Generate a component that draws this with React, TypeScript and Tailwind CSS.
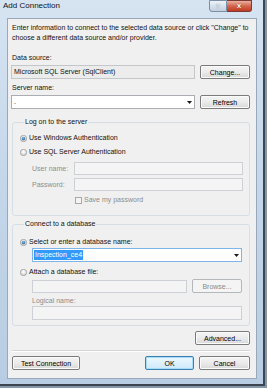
import React from "react";

const font = "font-['Liberation_Sans',Arial,sans-serif]";

function Radio({ checked }: { checked?: boolean }) {
  return (
    <svg width="7" height="7" viewBox="0 0 14 14" className="shrink-0">
      <defs>
        <radialGradient id="rg" cx="50%" cy="35%" r="60%">
          <stop offset="0%" stopColor="#ffffff" />
          <stop offset="100%" stopColor="#d4d4d4" />
        </radialGradient>
        <radialGradient id="rb" cx="45%" cy="35%" r="60%">
          <stop offset="0%" stopColor="#8fd0f5" />
          <stop offset="100%" stopColor="#1b5b9a" />
        </radialGradient>
      </defs>
      <circle cx="7" cy="7" r="6.3" fill="url(#rg)" stroke="#8a8a8a" strokeWidth="1.3" />
      {checked && <circle cx="7" cy="7" r="3.4" fill="url(#rb)" />}
    </svg>
  );
}

function Btn({ children, w, ok, disabled }: { children: React.ReactNode; w: string; ok?: boolean; disabled?: boolean }) {
  const base = "h-[14px] flex items-center justify-center rounded-[2px] border text-[7px] leading-none shrink-0 " + w;
  if (ok)
    return (
      <div className={base + " border-[#3c7fb1] bg-linear-to-b from-[#eef8fe] to-[#cde9fb] shadow-[inset_0_0_0_1px_#a6dcf8] text-black"}>
        {children}
      </div>
    );
  if (disabled)
    return <div className={base + " border-[#b5b8bb] bg-[#f4f4f4] text-[#8a8a8a]"}>{children}</div>;
  return (
    <div className={base + " border-[#7b7b7b] bg-linear-to-b from-[#f4f4f4] via-[#ebebeb] to-[#d8d8d8] shadow-[inset_0_0_0_1px_#fbfbfb] text-black"}>
      {children}
    </div>
  );
}

function Arrow() {
  return (
    <svg width="5" height="3" viewBox="0 0 5 3" className="shrink-0">
      <path d="M0 0H5L2.5 3Z" fill="#1a1a1a" />
    </svg>
  );
}

function Box({ className = "", children }: { className?: string; children?: React.ReactNode }) {
  return <div className={"border flex items-center " + className}>{children}</div>;
}

export default function App() {
  return (
    <div className={"w-[267px] h-[388px] bg-[#8397ab] " + font}>
      <div className="w-[265px] h-[386px] flex flex-col bg-linear-to-b from-[#d6e4f2] via-[#c3d6ea] to-[#b8cde3] border-r-2 border-b-2 border-[#3d4650] pl-[7px] pr-[6px] pb-[5px]">
        {/* title bar */}
        <div className="h-[18px] flex items-start justify-between -ml-[4px] -mr-[1px]">
          <span className="text-[8px] leading-none pt-[2px] text-[#111]">Add Connection</span>
          <div className="flex h-[12px] mr-[6px]">
            <div className="w-[18px] h-full rounded-bl-[3px] border border-[#7a8ea6] bg-linear-to-b from-[#eef3f9] to-[#c2d0e0] flex items-center justify-center text-[7px] text-[#f7f7f7] font-bold leading-none [text-shadow:0_0_1px_#4a5a6a]">
              ?
            </div>
            <div className="w-[25px] h-full rounded-br-[3px] border border-l-0 border-[#7a3a32] bg-linear-to-b from-[#eab0a2] via-[#d4654e] to-[#c0391f] flex items-center justify-center text-[8px] text-white font-bold leading-none [text-shadow:0_0_1px_#5a1a10]">
              x
            </div>
          </div>
        </div>

        {/* client area */}
        <div className="flex-1 bg-[#f0f0f0] border border-[#9aa9b9] pl-[3px] pr-[6px] flex flex-col text-[7px] leading-[10px] text-[#111]">
          <div className="pl-[1px] mt-[4px]">
            Enter information to connect to the selected data source or click "Change" to choose a different data source and/or provider.
          </div>

          <div className="mt-[10px] pl-[1px]">Data source:</div>
          <div className="mt-[2px] flex gap-[5px]">
            <Box className="flex-1 h-[14px] border-[#c4c7ca] bg-[#ececec] px-[2px]">Microsoft SQL Server (SqlClient)</Box>
            <Btn w="w-[50px]">Change...</Btn>
          </div>

          <div className="mt-[4px] pl-[1px]">Server name:</div>
          <div className="mt-[2px] flex gap-[5px]">
            <Box className="flex-1 h-[14px] border-[#abadb3] bg-white px-[2px] justify-between">
              <span>.</span>
              <Arrow />
            </Box>
            <Btn w="w-[50px]">Refresh</Btn>
          </div>

          {/* log on group */}
          <fieldset className="mt-[8px] ml-[1px] border border-[#d5dfe5] rounded-[3px] pl-[7px] pr-[6px] pb-[10px]">
            <legend className="ml-[4px] px-[1px]">Log on to the server</legend>
            <div className="mt-[6px] flex items-center gap-[2px]">
              <Radio checked />
              <span>Use Windows Authentication</span>
            </div>
            <div className="mt-[4px] flex items-center gap-[2px]">
              <Radio />
              <span>Use SQL Server Authentication</span>
            </div>
            <div className="mt-[5px] pl-[12px] flex items-center text-[#8d8d8d]">
              <span className="w-[42px]">User name:</span>
              <Box className="flex-1 h-[13px] border-[#cdd0d4] bg-[#f4f4f4]" />
            </div>
            <div className="mt-[3px] pl-[12px] flex items-center text-[#8d8d8d]">
              <span className="w-[42px]">Password:</span>
              <Box className="flex-1 h-[13px] border-[#cdd0d4] bg-[#f4f4f4]" />
            </div>
            <div className="mt-[4px] pl-[55px] flex items-center gap-[2px] text-[#8d8d8d]">
              <span className="w-[7px] h-[7px] border border-[#a8a8a8] bg-[#f4f4f4]" />
              <span>Save my password</span>
            </div>
          </fieldset>

          {/* database group */}
          <fieldset className="mt-[3px] ml-[1px] border border-[#d5dfe5] rounded-[3px] pl-[7px] pr-[7px] pb-[5px]">
            <legend className="ml-[4px] px-[1px]">Connect to a database</legend>
            <div className="mt-[8px] flex items-center gap-[2px]">
              <Radio checked />
              <span>Select or enter a database name:</span>
            </div>
            <div className="mt-[1px] pl-[12px]">
              <Box className="h-[14px] border-[#7eb4ea] bg-white pl-[1px] pr-[2px] justify-between">
                <span className="bg-[#3399ff] text-white px-[1px] leading-[10px]">Inspection_ce4</span>
                <Arrow />
              </Box>
            </div>
            <div className="mt-[5px] flex items-center gap-[2px]">
              <Radio />
              <span>Attach a database file:</span>
            </div>
            <div className="mt-[2px] pl-[12px] flex items-end gap-[5px]">
              <Box className="flex-1 h-[13px] border-[#cdd0d4] bg-[#f4f4f4]" />
              <Btn w="w-[50px]" disabled>
                Browse...
              </Btn>
            </div>
            <div className="mt-[3px] pl-[12px] text-[#8d8d8d]">Logical name:</div>
            <div className="pl-[12px]">
              <Box className="h-[14px] border-[#cdd0d4] bg-[#f4f4f4]" />
            </div>
          </fieldset>

          <div className="mt-[5px] flex justify-end">
            <Btn w="w-[55px]">Advanced...</Btn>
          </div>

          <div className="mt-[5px] ml-[1px] border-t border-[#d5d5d5] border-b border-b-white" />

          <div className="mt-[4px] ml-[1px] flex items-center">
            <Btn w="w-[68px]">Test Connection</Btn>
            <div className="flex-1" />
            <Btn w="w-[49px]" ok>
              OK
            </Btn>
            <div className="w-[5px]" />
            <Btn w="w-[51px]">Cancel</Btn>
          </div>
        </div>
      </div>
    </div>
  );
}
